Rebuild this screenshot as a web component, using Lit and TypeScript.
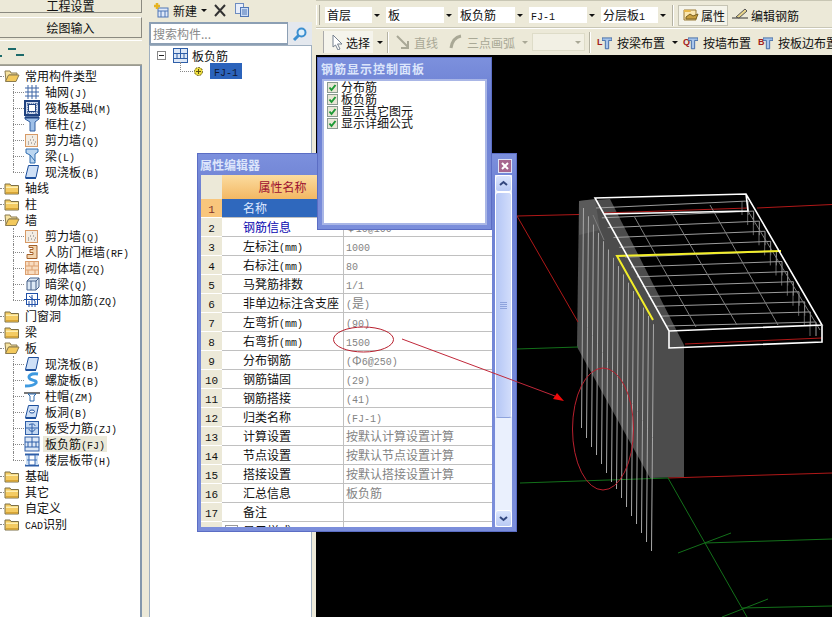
import { LitElement, html, css, svg } from "lit";
import { customElement } from "lit/decorators.js";

// splits ascii runs out so they get the narrow mono face next to the CJK text
const txt = (s: string) =>
  s.split(/([\x00-\x7f]+)/).map((p, i) => (i % 2 ? html`<span class="lat">${p}</span>` : p));

const ico = (body: unknown, w = 16, h = 16) =>
  html`<svg class="ico" width=${w} height=${h} viewBox="0 0 ${w} ${h}">${body}</svg>`;

const folderOpen = ico(svg`
  <path d="M1 3h5l1 2h6v2H5L2 13z" fill="#f7e3a0" stroke="#8b7b4e"/>
  <path d="M1.5 13.5 4.5 7h10.5l-3 6.500z" fill="#f3c95c" stroke="#8b7b4e"/>`);
const folderShut = ico(svg`
  <path d="M1 4h5l1 1.500h7.500v8.500H1z" fill="#f4cb62" stroke="#7d7048"/>
  <path d="M2 6.500h12v1.500H2z" fill="#fdeeb0"/>
  <path d="M2 12h12v1.500H2z" fill="#d8a536"/>`);

const icons: Record<string, unknown> = {
  grid: ico(svg`<path d="M1 4h14M1 8h14M1 12h14M4 1v14M8 1v14M12 1v14" stroke="#3c64a5" fill="none"/>`),
  raft: ico(svg`<rect x="1" y="1" width="14" height="14" fill="#cfd9ec" stroke="#1f4280" stroke-width="2"/><rect x="4.500" y="4.500" width="7" height="7" fill="#fff" stroke="#1f4280"/><path d="M1 4h14M1 12h14M4 1v14M12 1v14" stroke="#1f4280" stroke-dasharray="1 1"/>`),
  col: ico(svg`<path d="M1 1h14v2l-4 3v9H6V6L1 3z" fill="#9fc0e8" stroke="#2f5da0"/><path d="M1 1.500h14" stroke="#1f4280" stroke-width="2"/>`),
  shear: ico(svg`<rect x="1.500" y="2.500" width="12" height="12" fill="#f3ece2" stroke="#d79a66"/><path d="M4 12h1M7 11h1M10 12h1M6 8h1M9 8h1M11 10h1M8 5h1M4 10h1" stroke="#777"/>`),
  beam: ico(svg`<path d="M2 1h12v3l-3 2v9H6V7L2 5z" fill="#bcd6f0" stroke="#2f6db0"/><path d="M6 7l5 6" stroke="#2f6db0"/>`),
  slab: ico(svg`<path d="M4.500 1.500h10l-2.500 12H1.500z" fill="#cfe0f6" stroke="#1d4f9c"/><path d="M1.500 14h10.500" stroke="#1d4f9c" stroke-width="2"/>`),
  door: ico(svg`<path d="M5 1.500h8v13H3v-4h6v-2H6v-3h3v-2H5z" fill="#f2d5b0" stroke="#a4602a"/>`),
  brick: ico(svg`<rect x="1.500" y="1.500" width="13" height="13" fill="#f8dcc0" stroke="#dca070"/><path d="M1 6h14M1 10h14M5 2v4M10 2v4M8 6v4M4 10v4M11 10v4" stroke="#dca070"/>`),
  hidden: ico(svg`<path d="M3 5l3-3h9v9l-3 3H3z" fill="#dce8f5" stroke="#46608a"/><path d="M3 5h9v9M12 5l3-3M7 5v9" stroke="#46608a" fill="none"/>`),
  reinf: ico(svg`<rect x="2.500" y="1.500" width="11" height="11" fill="#fff" stroke="#2050a8"/><path d="M0 7.500h16M8 3v12M5 4l6 5M5 9v6M11 9v6" stroke="#2050a8" fill="none"/>`),
  spiral: ico(svg`<path d="M14 2C7 1 3 4 6 7c3 2 7 1 6 4-2 3-7 3-11 3" fill="none" stroke="#3f9ae0" stroke-width="3"/>`),
  cap: ico(svg`<path d="M0 4h16v2H0z" fill="#777"/><path d="M4 6h8l-2 2v5H6V8z" fill="#fff" stroke="#2f6db0"/>`),
  hole: ico(svg`<path d="M4.500 1.500h10l-2.500 12H1.500z" fill="#cfe0f6" stroke="#1d4f9c"/><ellipse cx="8" cy="7.500" rx="2.500" ry="1.500" fill="#fff" stroke="#1d4f9c"/><path d="M1.500 14h10.500" stroke="#1d4f9c" stroke-width="2"/>`),
  force: ico(svg`<rect x="1.500" y="1.500" width="13" height="13" fill="#c3d8f2" stroke="#2e5ea8"/><path d="M1 8h14M8 4v10M5 5c3-2 6-1 6 1M5 9c0 3 6 3 6 0" stroke="#2e5ea8" fill="none"/>`),
  neg: ico(svg`<rect x="1" y="1" width="14" height="14" fill="#dde8f7" stroke="#2e5ea8"/><path d="M1 6h14M1 11h14M8 1v10M4 6v5M12 6v5" stroke="#2e5ea8" fill="none"/>`),
  band: ico(svg`<path d="M1 2.500h14M1 13.500h14" stroke="#2e5ea8" stroke-width="2"/><path d="M2 4h3v9H2zM11 4h3v9h-3z" fill="#cddff3"/><path d="M5 3v10M11 3v10M3 8h10" stroke="#3a6db5"/>`),
};

type Node = { label: string; icon?: string; open?: boolean; mark?: boolean; last?: boolean };

const tree: Node[] = [
  { label: "常用构件类型", open: true },
  { label: "轴网(J)", icon: "grid" },
  { label: "筏板基础(M)", icon: "raft" },
  { label: "框柱(Z)", icon: "col" },
  { label: "剪力墙(Q)", icon: "shear" },
  { label: "梁(L)", icon: "beam" },
  { label: "现浇板(B)", icon: "slab", last: true },
  { label: "轴线" },
  { label: "柱" },
  { label: "墙", open: true },
  { label: "剪力墙(Q)", icon: "shear" },
  { label: "人防门框墙(RF)", icon: "door" },
  { label: "砌体墙(ZQ)", icon: "brick" },
  { label: "暗梁(Q)", icon: "hidden" },
  { label: "砌体加筋(ZQ)", icon: "reinf", last: true },
  { label: "门窗洞" },
  { label: "梁" },
  { label: "板", open: true },
  { label: "现浇板(B)", icon: "slab" },
  { label: "螺旋板(B)", icon: "spiral" },
  { label: "柱帽(ZM)", icon: "cap" },
  { label: "板洞(B)", icon: "hole" },
  { label: "板受力筋(ZJ)", icon: "force" },
  { label: "板负筋(FJ)", icon: "neg", mark: true },
  { label: "楼层板带(H)", icon: "band", last: true },
  { label: "基础" },
  { label: "其它" },
  { label: "自定义" },
  { label: "CAD识别" },
];

const props: [string, string][] = [
  ["名称", "FJ-1"],
  ["钢筋信息", "Φ10@100"],
  ["左标注(mm)", "1000"],
  ["右标注(mm)", "80"],
  ["马凳筋排数", "1/1"],
  ["非单边标注含支座", "(是)"],
  ["左弯折(mm)", "(90)"],
  ["右弯折(mm)", "1500"],
  ["分布钢筋", "(Φ6@250)"],
  ["钢筋锚固", "(29)"],
  ["钢筋搭接", "(41)"],
  ["归类名称", "(FJ-1)"],
  ["计算设置", "按默认计算设置计算"],
  ["节点设置", "按默认节点设置计算"],
  ["搭接设置", "按默认搭接设置计算"],
  ["汇总信息", "板负筋"],
  ["备注", ""],
];

const combos: [string, number][] = [
  ["首层", 57],
  ["板", 68],
  ["板负筋", 67],
  ["FJ-1", 68],
  ["分层板1", 67],
];

const checks = ["分布筋", "板负筋", "显示其它图元", "显示详细公式"];

const rebarEnds = [428, 438, 447, 455, 464, 473, 482, 489, 498, 507, 516, 524, 533, 542, 551];

const lerp = (a: number, b: number, t: number) => a + (b - a) * t;

const arrow = html`<i class="tri"></i>`;

const axisIcon = (letter: string) => html`<span class="axis">
  <b>${letter}</b>
  <svg width="12" height="17" viewBox="0 0 12 17"><path d="M0 3h12v3H8v10H4V6H0z" fill="#a9c6ea" stroke="#2f5da0"/></svg>
</span>`;

@customElement("app-root")
export class AppRoot extends LitElement {
  static styles = css`
    :host {
      display: block;
      position: relative;
      width: 832px;
      height: 617px;
      overflow: hidden;
      background: #ece9d8;
      font: 12px "Noto Sans CJK SC", sans-serif;
      color: #111;
    }
    .lat {
      font: 10px "Liberation Mono", monospace;
    }
    .ico {
      display: block;
      flex: none;
    }
    .main {
      display: flex;
      height: 100%;
    }
    .left {
      width: 142px;
      margin-right: 6px;
      display: flex;
      flex-direction: column;
    }
    .btn {
      display: flex;
      justify-content: center;
      align-items: center;
      font-size: 12px;
      border-right: 1px solid #8b8a80;
      border-bottom: 1px solid #8b8a80;
      box-sizing: border-box;
      flex: none;
      overflow: hidden;
    }
    .btn.one {
      height: 13px;
      line-height: 11px;
      align-items: flex-start;
      margin-bottom: 4px;
    }
    .btn.two {
      height: 21px;
      border-top: 1px solid #fff;
      margin-bottom: 2px;
    }
    .mini {
      height: 25px;
      flex: none;
      box-sizing: border-box;
      border-top: 1px solid #fff;
      border-bottom: 1px solid #a9a89a;
      display: flex;
      align-items: flex-end;
    }
    .mini svg {
      display: block;
    }
    .ltree {
      flex: 1;
      background: #fff;
      padding-top: 2px;
      border-right: 2px solid #8397ac;
      border-top: 1px solid #9a9a90;
    }
    .node {
      position: relative;
      height: 16px;
      display: flex;
      align-items: center;
      gap: 5px;
      padding-left: 4px;
      white-space: nowrap;
    }
    .node::before {
      content: "";
      position: absolute;
      left: 0;
      width: 4px;
      top: 8px;
      border-top: 1px dotted #888;
    }
    .node.kid {
      padding-left: 24px;
    }
    .node.kid::before {
      left: 13px;
      width: 11px;
    }
    .node.kid::after {
      content: "";
      position: absolute;
      left: 13px;
      top: 0;
      height: 16px;
      border-left: 1px dotted #888;
    }
    .node.kid.last::after {
      height: 8px;
    }
    .node.mark span.lbl {
      background: #ebe9d9;
    }
    .lbl {
      padding: 0 2px 0 0;
      line-height: 16px;
    }
    .kid .lbl {
      margin-left: -2px;
      padding-left: 2px;
    }
    .mid {
      width: 164px;
      margin-right: 4px;
      display: flex;
      flex-direction: column;
    }
    .midbar {
      height: 22px;
      flex: none;
      display: flex;
      align-items: center;
      padding: 0 0 2px 5px;
      box-sizing: border-box;
    }
    .midbar .new {
      margin-left: 4px;
      margin-right: 4px;
    }
    .midbar .x {
      margin: 0 7px 0 6px;
    }
    .search {
      height: 23px;
      flex: none;
      display: flex;
      padding-left: 1px;
    }
    .search .box {
      width: 134px;
      background: #fff;
      border: 2px solid #8c9fb4;
      border-right-width: 1px;
      color: #8a8a8a;
      padding-left: 2px;
      line-height: 19px;
    }
    .search .go {
      flex: 1;
      display: flex;
      align-items: center;
      justify-content: center;
      background: #e4e8ee;
    }
    .mtree {
      flex: 1;
      background: #fff;
      margin-left: 1px;
      border-top: 1px solid #a0b0c0;
      border-left: 1px solid #a0b0c0;
      border-right: 1px solid #a0b0c0;
      padding-top: 1px;
      position: relative;
    }
    .mrow {
      height: 16px;
      display: flex;
      align-items: center;
    }
    .plus {
      width: 9px;
      height: 9px;
      box-sizing: border-box;
      border: 1px solid #888;
      margin: 0 7px 0 7px;
      position: relative;
    }
    .plus::after {
      content: "";
      position: absolute;
      left: 1px;
      right: 1px;
      top: 3px;
      border-top: 1px solid #222;
    }
    .mrow .name {
      margin-left: 4px;
    }
    .mrow.sub {
      padding-left: 43px;
      position: relative;
    }
    .mrow.sub::before {
      content: "";
      position: absolute;
      left: 30px;
      top: -1px;
      width: 12px;
      height: 9px;
      border-left: 1px dotted #888;
      border-bottom: 1px dotted #888;
    }
    .sel {
      background: #2b63bb;
      color: #101830;
      margin-left: 6px;
      padding: 0 4px;
      line-height: 16px;
    }
    .right {
      flex: 1;
      display: flex;
      flex-direction: column;
      min-width: 0;
    }
    .bars {
      height: 55px;
      flex: none;
      padding-top: 2px;
      box-sizing: border-box;
      border-top: 1px solid #c8c6b4;
    }
    .bar {
      display: flex;
      align-items: center;
      white-space: nowrap;
      overflow: hidden;
    }
    .bar.a {
      height: 24px;
      padding-left: 0;
      gap: 4px;
      border-bottom: 1px solid #c9c7b6;
    }
    .bar.b {
      height: 26px;
      border-top: 1px solid #fff;
      padding-left: 7px;
    }
    .grip {
      width: 2px;
      height: 20px;
      border-left: 1px solid #fff;
      border-right: 1px solid #aaa89a;
      flex: none;
    }
    .bar.a .grip {
      margin-right: 1px;
    }
    .combo {
      height: 16px;
      display: flex;
      background: #fff;
      justify-content: space-between;
      flex: none;
      box-sizing: border-box;
      padding-left: 2px;
      line-height: 15px;
    }
    .combo .dd {
      width: 10px;
      background: #ece9d8;
      display: flex;
      align-items: center;
      justify-content: center;
    }
    .tri {
      display: block;
      width: 0;
      height: 0;
      border: 3px solid transparent;
      border-top: 3px solid #111;
      border-bottom: 0;
      flex: none;
    }
    .sep {
      width: 0;
      height: 21px;
      border-left: 1px solid #b4b2a2;
      border-right: 1px solid #fff;
      flex: none;
    }
    .sp-pick {
      width: 4px;
      flex: none;
    }
    .sep.s1 {
      margin: 0 7px 0 4px;
    }
    .sep.s2 {
      margin-right: 6px;
    }
    .tool {
      display: flex;
      align-items: center;
      gap: 3px;
      flex: none;
    }
    .tool.on {
      width: 50px;
      height: 21px;
      box-sizing: border-box;
      background: #f5f4ea;
      border: 1px solid #c6c4b4;
      padding-left: 4px;
      gap: 2px;
    }
    .tool.pick {
      width: 50px;
      height: 22px;
      box-sizing: border-box;
      background: #f5f4ec;
      border-left: 1px solid #aaa;
      padding-left: 7px;
      gap: 3px;
    }
    .off {
      color: #a9a896;
    }
    .off.line {
      margin-left: 4px;
    }
    .off.arc {
      margin: 0 7px 0 4px;
    }
    .arc-ico {
      margin-left: 11px;
    }
    .empty {
      width: 53px;
      height: 18px;
      box-sizing: border-box;
      background: #f2f0e4;
      border: 1px solid #dedcc8;
      display: flex;
      align-items: center;
      justify-content: flex-end;
      padding-right: 3px;
      margin: 0 4px 0 4px;
      flex: none;
    }
    .empty .tri,
    .off .tri {
      border-top-color: #a9a896;
    }
    .axis {
      display: flex;
      align-items: center;
      width: 15px;
      flex: none;
    }
    .axis b {
      font: bold 9px "Liberation Sans", sans-serif;
      width: 5px;
      color: #a02020;
    }
    .lay-l {
      margin: 0 7px 0 5px;
    }
    .lay-q {
      margin-left: 5px;
    }
    .lay-w {
      margin: 0 7px 0 5px;
    }
    .lay-b {
      margin-left: 5px;
    }
    .canvas {
      flex: 1;
      background: #000;
    }
    .canvas svg,
    .notes {
      display: block;
    }
    .win {
      position: absolute;
      box-sizing: border-box;
      background: linear-gradient(#7c90dd, #6c80d2 40px, #7b8edb);
      border: 1px solid #5b6dc4;
      display: flex;
      flex-direction: column;
    }
    .title {
      height: 21px;
      flex: none;
      display: flex;
      align-items: center;
      justify-content: space-between;
      color: #dce5fb;
      font-weight: 700;
      margin-left: -1px;
    }
    .props {
      left: 197px;
      top: 153px;
      width: 320px;
      height: 379px;
      padding: 0 4px 4px 3px;
    }
    .close {
      width: 14px;
      height: 14px;
      margin-top: 2px;
      border: 1px solid #dfe2f5;
      box-sizing: border-box;
      background: #a6668e;
      display: flex;
      align-items: center;
      justify-content: center;
    }
    .pbody {
      flex: 1;
      display: flex;
      gap: 3px;
      min-height: 0;
    }
    .table {
      width: 291px;
      background: #fff;
      overflow: hidden;
      flex: none;
    }
    .tr {
      display: grid;
      grid-template-columns: 21px 121px 149px;
      height: 19px;
      box-sizing: border-box;
      border-bottom: 1px solid #c0c0c0;
      line-height: 18px;
      white-space: nowrap;
    }
    .tr.head {
      height: 24px;
      border: 0;
      line-height: 24px;
    }
    .tr > div {
      overflow: hidden;
    }
    .no {
      background: #ece9d8;
      text-align: center;
      border-bottom: 1px solid #fff;
      margin-bottom: -1px;
    }
    .no .lat {
      font: 11px "Liberation Mono", monospace;
    }
    .nm {
      padding-left: 21px;
    }
    .val {
      padding-left: 2px;
      color: #838383;
      border-left: 1px solid #c0c0c0;
    }
    .head .hn {
      background: linear-gradient(#fbdc9f, #f3b863);
      color: #9c1030;
      text-align: center;
    }
    .tr.cur .no {
      background: #f9c67c;
      color: #80302a;
    }
    .tr.cur .nm {
      background: #2f68bd;
      color: #dfe9ff;
    }
    .info {
      color: #0808b0;
    }
    .extra {
      padding-left: 3px;
    }
    .tr .box {
      display: inline-block;
      width: 11px;
      height: 11px;
      border: 1px solid #999;
      vertical-align: -2px;
      margin-right: 5px;
    }
    .scroll {
      width: 17px;
      flex: none;
      background: #eaf0fd;
      display: flex;
      flex-direction: column;
      align-items: stretch;
    }
    .sb {
      height: 17px;
      flex: none;
      box-sizing: border-box;
      background: linear-gradient(#dbe5fd, #b9caf5);
      border: 1px solid #fff;
      border-radius: 3px;
      display: flex;
      align-items: center;
      justify-content: center;
    }
    .thumb {
      height: 226px;
      flex: none;
      box-sizing: border-box;
      background: linear-gradient(90deg, #b4c6f5, #d2ddfb);
      border: 1px solid #fff;
      border-bottom-color: #8ea3dc;
      border-radius: 3px;
      display: flex;
      align-items: center;
      justify-content: center;
    }
    .gap {
      flex: 1;
    }
    .panel {
      left: 317px;
      top: 57px;
      width: 175px;
      height: 173px;
      padding: 0 4px 4px 4px;
    }
    .panel .title {
      letter-spacing: 1px;
    }
    .list {
      flex: 1;
      background: #fff;
      border: 2px solid #a9b6e6;
      padding: 0 0 0 3px;
    }
    .chk {
      height: 12px;
      line-height: 12px;
      display: flex;
      align-items: center;
      gap: 3px;
    }
    .notes {
      position: absolute;
      left: 0;
      top: 0;
      pointer-events: none;
    }
  `;

  renderCanvas() {
    const cross = [];
    for (let i = 0; i < 13; i++) {
      const t = i / 12;
      const lx = lerp(596, 666, t);
      const ly = lerp(208, 326, t);
      const rx = lerp(748, 816, t);
      const ry = lerp(201, 322, t);
      cross.push(svg`<path d="M${rx - 6} ${ry}v14" stroke="#666"/>`);
      cross.push(svg`<path d="M${lx} ${ly}L${rx} ${ry}M${rx} ${ry}v14" stroke="#9c9c9c"/>`);
    }
    const bars = rebarEnds.map((end, i) => {
      const x = 581.5 + i * 5;
      const top = 208 + i * 8.3;
      return svg`<path d="M${x + 2} ${top}L${x + 1} ${(top + end) / 2}L${x} ${end}" stroke="#a8a8a8" fill="none"/>`;
    });
    return html`<svg width="516" height="562" viewBox="316 55 516 562" fill="none">
      <polygon points="579,201 610,199 684,345 684,477 650,478 577,347" fill="#4c4c4c"/>
      <polygon points="579,201 595,199 600,230 579,235" fill="#5a5a5a"/>
      <path d="M517 216L579 214.500M517 216L578 322M604 213L748 208M757 208L832 204.500M685 344L822 338M668 478L832 473" stroke="#b01818"/>
      <path d="M517 349L578 347M520 483L668 478L747 617M678 553L731 533M705 543L832 539M722 617L768 599M742 608L832 606" stroke="#13701a"/>
      ${bars}
      ${cross}
      <path d="M634 216L696 327M671 212L737 325M710 205L778 325M593 215L604 240M748 211L820 330" stroke="#7c7c7c"/>
      <path d="M653 320L617 256L781 251" stroke="#f2ee2a" stroke-width="2"/>
      <path d="M595 198L746 194L822 325L669 331ZM669 331V348L822 342V325M604 214L748 211L746 194" stroke="#fff" stroke-width="1.600"/>
    </svg>`;
  }

  render() {
    return html`
      <div class="main">
        <div class="left">
          <div class="btn one">工程设置</div>
          <div class="btn two">绘图输入</div>
          <div class="mini">
            <svg width="30" height="20" viewBox="0 0 30 20"><path d="M0 12h2M8 5h8M16 11h8" stroke="#1c6a6a" stroke-width="2"/></svg>
          </div>
          <div class="ltree">
            ${tree.map(
              (n) => html`<div class="node ${n.icon ? "kid" : ""} ${n.last ? "last" : ""} ${n.mark ? "mark" : ""}">
                ${n.icon ? icons[n.icon] : n.open ? folderOpen : folderShut}
                <span class="lbl">${txt(n.label)}</span>
              </div>`
            )}
          </div>
        </div>

        <div class="mid">
          <div class="midbar">
            ${ico(svg`<rect x="5" y="6" width="10" height="9" fill="#dfe8f8" stroke="#4f76b5"/><path d="M5 9h10M8 9v6M12 9v6" stroke="#4f76b5"/><path d="M4 1v6M1 4h6" stroke="#e6b422" stroke-width="2.500"/>`)}
            <span class="new">新建</span>${arrow}
            <span class="x">${ico(svg`<path d="M2 2l10 11M12 2L2 13" stroke="#333" stroke-width="2"/>`, 14, 15)}</span>
            ${ico(svg`<rect x="1.500" y="1.500" width="8" height="10" fill="#e8eefa" stroke="#6d8cc0"/><rect x="6.500" y="5.500" width="8" height="9" fill="#cbdcf5" stroke="#4f76b5"/><path d="M8 8h5M8 10h5M8 12h5" stroke="#4f76b5"/>`)}
          </div>
          <div class="search">
            <div class="box">搜索构件...</div>
            <div class="go">
              ${ico(svg`<circle cx="9.500" cy="6.500" r="4" fill="#dff0fb" stroke="#3b8fd0" stroke-width="2"/><path d="M6.500 9.500L2 14" stroke="#3b8fd0" stroke-width="3"/>`)}
            </div>
          </div>
          <div class="mtree">
            <div class="mrow">
              <i class="plus"></i>
              ${ico(svg`<rect x=".5" y=".5" width="14" height="14" fill="#dde8f7" stroke="#2e5ea8"/><path d="M1 5.500h13M1 10.500h13M7.500 1v9.500M4 5.500v5M11 5.500v5" stroke="#2e5ea8"/>`, 15, 15)}
              <span class="name">板负筋</span>
            </div>
            <div class="mrow sub">
              ${ico(svg`<circle cx="5.500" cy="5.500" r="4" fill="#f0e040" stroke="#5a5010" stroke-dasharray="2 1"/><path d="M3 5.500h5M5.500 3v5" stroke="#5a5010"/>`, 11, 11)}
              <span class="sel">${txt("FJ-1")}</span>
            </div>
          </div>
        </div>

        <div class="right">
          <div class="bars">
            <div class="bar a">
              <i class="grip"></i>
              ${combos.map(
                ([label, w]) => html`<div class="combo" style="width:${w}px">
                  <span>${txt(label)}</span><span class="dd">${arrow}</span>
                </div>`
              )}
              <i class="sep"></i>
              <div class="tool on">
                ${ico(svg`<path d="M1 3h12v10H1z" fill="#fbe7b0" stroke="#9a7b36"/><path d="M1 3h6l1 2H1z" fill="#e8b84a"/><path d="M3 10l4-3 3 2 5-2-2 5H3z" fill="#c9a040" stroke="#7a6020"/>`)}
                <span>属性</span>
              </div>
              <div class="tool">
                ${ico(svg`<path d="M0 11h16" stroke="#333"/><path d="M4 10L13 2l2 2-8 7z" fill="#e8d48a" stroke="#555"/>`)}
                <span>编辑钢筋</span>
              </div>
            </div>
            <div class="bar b">
              <div class="tool pick">
                ${ico(svg`<path d="M2 1l9 9H6.500l2.500 5-2 1-2.500-5L2 13z" fill="#fff" stroke="#75808f"/>`, 12, 16)}
                <span>选择</span>
              </div>
              <span class="sp-pick"></span>${arrow}
              <i class="sep s1"></i>
              ${ico(svg`<path d="M1 1l11 11M12 6v7H5" stroke="#a9a896" stroke-width="2" fill="none"/>`, 14, 15)}
              <span class="off line">直线</span>
              <span class="arc-ico">${ico(svg`<path d="M2 14C3 7 7 3 12 2" stroke="#a9a896" stroke-width="3" fill="none"/>`, 14, 16)}</span>
              <span class="off arc">三点画弧</span>
              <span class="off">${arrow}</span>
              <div class="empty">${arrow}</div>
              <i class="sep s2"></i>
              ${axisIcon("L")}
              <span class="lay-l">按梁布置</span>${arrow}
              <span class="lay-q"></span>
              ${axisIcon("Q")}
              <span class="lay-w">按墙布置</span>
              ${axisIcon("B")}
              <span class="lay-b">按板边布置</span>
            </div>
          </div>
          <div class="canvas">${this.renderCanvas()}</div>
        </div>
      </div>

      <div class="win props">
        <div class="title">
          <span>属性编辑器</span>
          <span class="close">${ico(svg`<path d="M1 1l6 6M7 1L1 7" stroke="#fff" stroke-width="2"/>`, 8, 8)}</span>
        </div>
        <div class="pbody">
          <div class="table">
            <div class="tr head">
              <div class="no"></div>
              <div class="hn">属性名称</div>
              <div class="hv"></div>
            </div>
            ${props.map(
              ([name, value], i) => html`<div class="tr ${i === 0 ? "cur" : ""}">
                <div class="no">${txt(String(i + 1))}</div>
                <div class="nm ${i === 1 ? "info" : ""}">${txt(name)}</div>
                <div class="val">${txt(value)}</div>
              </div>`
            )}
            <div class="tr">
              <div class="no"></div>
              <div class="extra"><i class="box"></i>显示样式</div>
              <div class="val"></div>
            </div>
          </div>
          <div class="scroll">
            <div class="sb">${ico(svg`<path d="M1 5l3.500-3L8 5" stroke="#33477e" stroke-width="2" fill="none"/>`, 9, 7)}</div>
            <div class="thumb">${ico(svg`<path d="M0 .500h7M0 2.500h7M0 4.500h7M0 6.500h7" stroke="#8ea3dc"/>`, 7, 7)}</div>
            <div class="gap"></div>
            <div class="sb">${ico(svg`<path d="M1 2l3.500 3L8 2" stroke="#33477e" stroke-width="2" fill="none"/>`, 9, 7)}</div>
          </div>
        </div>
      </div>

      <div class="win panel">
        <div class="title"><span>钢筋显示控制面板</span></div>
        <div class="list">
          ${checks.map(
            (c) => html`<div class="chk">
              ${ico(svg`<rect x=".5" y=".5" width="10" height="10" fill="#e9e6d6" stroke="#8a9a90"/><path d="M2.500 5.500L4.500 8 8.500 3" stroke="#1d9a35" stroke-width="2" fill="none"/>`, 11, 11)}
              <span>${c}</span>
            </div>`
          )}
        </div>
      </div>

      <svg class="notes" width="832" height="617" fill="none">
        <ellipse cx="363.500" cy="339.500" rx="30" ry="12.500" stroke="#b8202e"/>
        <path d="M402 339L555 396" stroke="#c0283a"/>
        <polygon points="557,393 564,401 553,399" fill="#f00a0a"/>
        <ellipse cx="603" cy="429" rx="30.500" ry="61" stroke="#b8202e"/>
      </svg>
    `;
  }
}
